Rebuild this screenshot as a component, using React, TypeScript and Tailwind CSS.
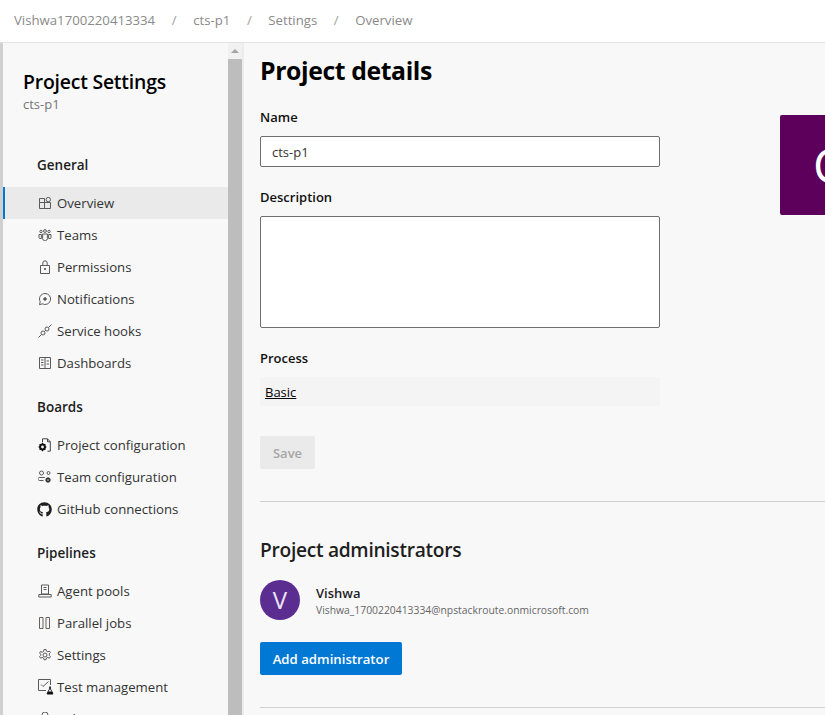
import { FaGithub } from 'react-icons/fa'
import type { ReactNode } from 'react'

const Stroke = ({ children }: { children: ReactNode }) => (
  <svg width="14" height="14" viewBox="0 0 14 14" fill="none" stroke="#5a5a5a" strokeWidth="1">
    {children}
  </svg>
)

const icons: Record<string, ReactNode> = {
  overview: (
    <Stroke>
      <path d="M1.5 6.5h5v6h-5zM6.5 6.5h6v6h-6zM1.5 6.5v-4h5v4" />
      <circle cx="10.3" cy="3.6" r="2.2" />
    </Stroke>
  ),
  teams: (
    <Stroke>
      <circle cx="3" cy="3.5" r="1.2" />
      <circle cx="7" cy="3" r="1.4" />
      <circle cx="11" cy="3.5" r="1.2" />
      <path d="M1 6.5h2.4v4H2a1 1 0 0 1-1-1zM13 6.5h-2.4v4H12a1 1 0 0 0 1-1zM4.6 6h4.8v4.5a2 2 0 0 1-2 2h-.8a2 2 0 0 1-2-2z" />
    </Stroke>
  ),
  permissions: (
    <Stroke>
      <path d="M2.5 5.5h9v8h-9zM4.8 5.5V3a2.2 2.2 0 0 1 4.4 0v2.5" />
      <circle cx="7" cy="9" r=".7" fill="#5a5a5a" />
    </Stroke>
  ),
  notifications: (
    <Stroke>
      <path d="M7 1.5a5.5 5.5 0 1 1-2.6 10.3L1.5 12.7l.7-3A5.5 5.5 0 0 1 7 1.5z" />
      <circle cx="7" cy="7" r="1.3" fill="#5a5a5a" />
    </Stroke>
  ),
  hooks: (
    <Stroke>
      <path d="M.5 13.5l3-3M10.5 3.5l3-3" />
      <circle cx="5" cy="9" r="2" />
      <circle cx="9" cy="5" r="2" />
      <path d="M6.4 7.6l1.2-1.2" />
    </Stroke>
  ),
  dashboards: (
    <Stroke>
      <path d="M1.5 1.5h11v11h-11zM7 1.5v11M3 4h2.5M3 6.5h2.5M3 9h2.5M8.5 5h2.5M8.5 8h2.5" />
    </Stroke>
  ),
  project: (
    <svg width="14" height="14" viewBox="0 0 14 14" fill="none" stroke="#444" strokeWidth="1">
      <path d="M4.5 4V.8h5l2.8 3v9.4H9.5M9.5.8v3h2.8" />
      <circle cx="4.5" cy="9" r="2.4" fill="none" stroke="#111" strokeWidth="2" />
      <path d="M4.5 4.8v1.4M4.5 11.8v1.4M.5 9h1.4M7.1 9h1.4M1.7 6.2l1 1M6.3 10.8l1 1M7.3 6.2l-1 1M2.7 10.8l-1 1" stroke="#111" strokeWidth="1.2" />
    </svg>
  ),
  team: (
    <svg width="14" height="14" viewBox="0 0 14 14" fill="none" stroke="#5a5a5a" strokeWidth="1">
      <circle cx="3.5" cy="3" r="2" />
      <circle cx="10.5" cy="3" r="1.5" />
      <path d="M6.8 7.5H1.3a1.5 1.5 0 0 0-.5 2.8 1 1 0 0 0 .5.2h4.2" />
      <circle cx="10" cy="10" r="2.2" fill="#333" stroke="#333" />
      <circle cx="10" cy="10" r=".7" fill="#f8f8f8" stroke="none" />
    </svg>
  ),
  agent: (
    <Stroke>
      <path d="M3.5 1h7v9h-7zM5.5 3.5h3M5.5 5.5h3M.8 13h12.4v-2.5H.8z" />
    </Stroke>
  ),
  parallel: (
    <Stroke>
      <path d="M1.5 1.5h3.5v11H1.5zM8 1.5h3.5v11H8z" stroke="#66615a" />
    </Stroke>
  ),
  settings: (
    <Stroke>
      <circle cx="7" cy="7" r="2" />
      <path d="M6 1.5h2l.4 1.6 1.5.7 1.5-.8 1 1.6-1.1 1.2v1.6l1.1 1.2-1 1.6-1.5-.8-1.5.7-.4 1.6H6l-.4-1.6-1.5-.7-1.5.8-1-1.6 1.1-1.2V6.2L1.6 5l1-1.6 1.5.8 1.5-.7z" />
    </Stroke>
  ),
  test: (
    <svg width="16" height="16" viewBox="0 0 16 16" fill="none" stroke="#5a5a5a" strokeWidth="1">
      <path d="M8 11.5H.5V.5h12V6M3 5.5l2 2 5.5-5" />
      <path d="M11.5 7.5v2.5L9 14.5h6L12.5 10V7.5" fill="#f8f8f8" stroke="#333" />
      <path d="M10 12.5h4l1 3H9z" fill="#111" stroke="none" />
    </svg>
  ),
  release: (
    <Stroke>
      <path d="M4 5V3a3 3 0 0 1 6 0v2M2.5 5h9v8h-9z" />
    </Stroke>
  ),
  github: <FaGithub size={15} color="#1f1f1f" className="-ml-px" />,
}

const sections = [
  {
    title: 'General',
    items: [
      ['overview', 'Overview'],
      ['teams', 'Teams'],
      ['permissions', 'Permissions'],
      ['notifications', 'Notifications'],
      ['hooks', 'Service hooks'],
      ['dashboards', 'Dashboards'],
    ],
  },
  {
    title: 'Boards',
    items: [
      ['project', 'Project configuration'],
      ['team', 'Team configuration'],
      ['github', 'GitHub connections'],
    ],
  },
  {
    title: 'Pipelines',
    items: [
      ['agent', 'Agent pools'],
      ['parallel', 'Parallel jobs'],
      ['settings', 'Settings'],
      ['test', 'Test management'],
      ['release', 'Release retention'],
    ],
  },
]

const crumbs = ['Vishwa1700220413334', 'cts-p1', 'Settings', 'Overview']

function Sidebar() {
  return (
    <aside className="w-[225px] shrink-0 bg-[#f8f8f8]">
      <div className="pl-[20px] pt-[25px]">
        <h1 className="text-[19.4px] leading-[28px] font-semibold text-black tracking-[-0.2px]">Project Settings</h1>
        <p className="text-[13px] leading-[16px] text-[#767676]">cts-p1</p>
      </div>
      <nav className="mt-[31px]">
        {sections.map((section) => (
          <div key={section.title} className="mb-[6px]">
            <h2 className="pl-[34px] h-[44px] pt-[12px] text-[13.5px] leading-[20px] font-semibold text-[#1e1e1e]">{section.title}</h2>
            <ul>
              {section.items.map(([icon, label]) => (
                <li
                  key={label}
                  className={`h-[32px] flex items-center text-[13.2px] text-[#333] ${
                    label === 'Overview' ? 'bg-[#eaeaea] border-l-2 border-[#0078d4] pl-[33px]' : 'pl-[35px]'
                  }`}
                >
                  <span className="w-[19px] h-[16px] flex items-center justify-start shrink-0">{icons[icon]}</span>
                  <span className="translate-y-px">{label}</span>
                </li>
              ))}
            </ul>
          </div>
        ))}
      </nav>
    </aside>
  )
}

export default function App() {
  return (
    <div className="w-[825px] h-[715px] overflow-hidden bg-[#f8f8f8] font-['Open_Sans','Noto_Sans',sans-serif]">
      <header className="h-[43px] bg-white border-b border-[#e2e2e2] pl-[14px] flex items-center text-[13.2px] text-[#8a8a8a]">
        {crumbs.map((crumb, i) => (
          <span key={crumb} className="flex items-center">
            {i > 0 && <span className="w-[38px] text-center text-[#a0a0a0]">/</span>}
            {crumb}
          </span>
        ))}
      </header>

      <div className="flex h-[672px]">
        <div className="w-[3px] shrink-0 bg-[#d0d0d0]" />
        <Sidebar />
        <div className="w-[14px] shrink-0 bg-[#f1f1f1] flex flex-col items-center">
          <div className="h-[16px] flex items-center justify-center">
            <div className="w-0 h-0 border-l-[4px] border-r-[4px] border-b-[4px] border-l-transparent border-r-transparent border-b-[#a3a3a3]" />
          </div>
          <div className="w-full flex-1 bg-[#bdbdbd] mr-px" />
        </div>
        <div className="w-[2px] shrink-0 bg-[#ececec]" />

        <main className="flex-1 pl-[16px] min-w-0">
          <div className="flex">
            <div className="w-[400px] shrink-0">
              <h1 className="h-[56px] pt-[9px] text-[24.8px] leading-[36px] font-bold text-black tracking-[-0.4px]">Project details</h1>
              <label className="block mt-[8px] text-[13px] leading-[20px] font-semibold text-[#111]">Name</label>
              <div className="mt-[9px] h-[31px] bg-white border border-[#6e6e6e] rounded-[2px] px-[11px] pt-[2px] flex items-center text-[13px] text-[#333]">cts-p1</div>
              <label className="block mt-[20px] text-[13px] leading-[20px] font-semibold text-[#111]">Description</label>
              <div className="mt-[9px] h-[112px] bg-white border border-[#6e6e6e] rounded-[2px]" />
              <label className="block mt-[20px] text-[13px] leading-[20px] font-semibold text-[#111]">Process</label>
              <div className="mt-[9px] h-[29px] bg-[#f4f4f4] pl-[5px] pt-[2px] flex items-center text-[13px] text-black underline">Basic</div>
              <button className="mt-[30px] block w-[55px] h-[33px] pt-[2px] bg-[#eaeaea] rounded-[2px] text-[13px] font-semibold text-[#a6a6a6]">Save</button>
            </div>
            <div className="ml-[120px] mt-[72px] w-[120px] h-[100px] shrink-0 bg-[#5c005c] rounded-[2px] pl-[33px] flex items-center text-[48px] text-white leading-none">C</div>
          </div>

          <div className="mt-[32px] border-t border-[#d0d0d0]" />
          <h2 className="mt-[34px] text-[19.2px] leading-[28px] font-semibold text-[#1e1e1e] tracking-[-0.3px]">Project administrators</h2>
          <div className="mt-[16px] flex items-center">
            <div className="w-[40px] h-[40px] rounded-full bg-[#5c2d91] flex items-center justify-center text-[24px] font-normal text-[#ece6f4]">V</div>
            <div className="ml-[16px]">
              <div className="text-[13px] leading-[18px] font-semibold text-[#1e1e1e] translate-y-px">Vishwa</div>
              <div className="mt-[2px] text-[10.35px] leading-[14px] text-[#666]">Vishwa_1700220413334@npstackroute.onmicrosoft.com</div>
            </div>
          </div>
          <button className="mt-[22px] block w-[142px] h-[33px] pt-[2px] bg-[#0078d4] rounded-[2px] text-[13.2px] font-semibold text-white">Add administrator</button>
          <div className="mt-[32px] border-t border-[#d0d0d0]" />
        </main>
      </div>
    </div>
  )
}
